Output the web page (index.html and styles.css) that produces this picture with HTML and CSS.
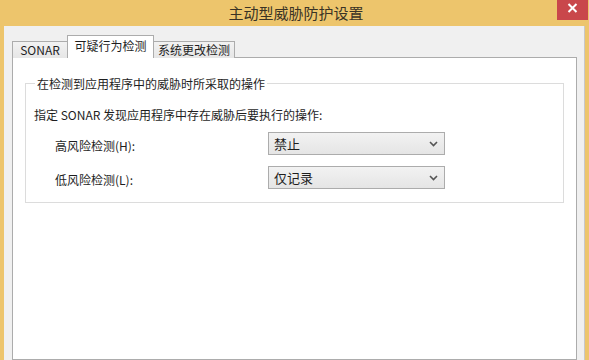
FILE: index.html
```html
<!DOCTYPE html>
<html lang="zh-CN">

<head>
    <meta charset="UTF-8">
    <meta name="viewport" content="width=device-width, initial-scale=1.0">
    <title>主动型威胁防护设置</title>
    <link rel="stylesheet" href="styles.css">
</head>

<body>

    <div class="window">
        <!-- Barre de titre -->
        <div class="title-bar">
            <span class="title-spacer"></span>
            <span class="title">主动型威胁防护设置</span>
            <svg class="caption-x" width="31" height="20" viewBox="0 0 31 20">
                <rect x="0" y="0" width="31" height="20" fill="#c9474b"/>
                <path d="M11.5 4 L19.5 12 M19.5 4 L11.5 12" stroke="#fff" stroke-width="2"/>
            </svg>
        </div>

        <div class="window-body">
            <!-- Onglets -->
            <div class="tabs">
                <div class="tab tab-sonar">SONAR</div>
                <div class="tab tab-active">可疑行为检测</div>
                <div class="tab tab-system">系统更改检测</div>
            </div>

            <div class="tab-panel">
                <fieldset class="group-box">
                    <legend>在检测到应用程序中的威胁时所采取的操作</legend>

                    <p class="intro">指定 SONAR 发现应用程序中存在威胁后要执行的操作:</p>

                    <div class="option-row">
                        <label class="option-label">高风险检测(H):</label>
                        <div class="combo">
                            <span>禁止</span>
                            <svg width="9" height="6" viewBox="0 0 9 6"><path d="M1 1 L4.5 4.5 L8 1" fill="none" stroke="#555" stroke-width="1.6"/></svg>
                        </div>
                    </div>

                    <div class="option-row">
                        <label class="option-label">低风险检测(L):</label>
                        <div class="combo">
                            <span>仅记录</span>
                            <svg width="9" height="6" viewBox="0 0 9 6"><path d="M1 1 L4.5 4.5 L8 1" fill="none" stroke="#555" stroke-width="1.6"/></svg>
                        </div>
                    </div>
                </fieldset>
            </div>
        </div>
    </div>

</body>
</html>
```

FILE: styles.css
```css
body {
    font-family: "Noto Sans CJK SC", "Noto Sans", sans-serif;
    font-size: 12px;
    color: #1e1e1e;
    margin: 0;
    width: 589px;
    height: 360px;
    overflow: hidden;
}

.window {
    height: 360px;
    background-color: #edc56c;
    border-left: 4px solid #edc56c;
    border-right: 1px solid #edc56c;
    display: flex;
    flex-direction: column;
}

.title-bar {
    height: 26px;
    display: flex;
    align-items: flex-start;
}

.title-spacer {
    width: 31px;
}

.title {
    flex: 1;
    text-align: center;
    font-size: 15px;
    line-height: 26px;
    color: #3a3325;
}

.caption-x {
    flex: none;
    display: block;
}

.window-body {
    flex: 1;
    background-color: #f0f0f0;
    padding: 9px 7px 0 8px;
    margin-right: 3px;
    display: flex;
    flex-direction: column;
    border-right: 1px solid #c8c8c8;
}

.tabs {
    display: flex;
    align-items: flex-end;
    position: relative;
    z-index: 1;
    margin-bottom: -1px;
}

.tab {
    height: 16px;
    line-height: 15px;
    text-align: center;
    border: 1px solid #acacac;
    border-bottom: none;
    background: linear-gradient(#f2f2f2, #e6e6e6);
}

.tab-sonar {
    width: 54px;
}

.tab-active {
    width: 85px;
    height: 22px;
    line-height: 20px;
    background: #fff;
    border-left: 1px solid #acacac;
    margin-left: -1px;
}

.tab-system {
    width: 80px;
    border-left: none;
}

.tab-panel {
    flex: 1;
    background-color: #fff;
    border: 1px solid #acacac;
    padding: 17px 12px 0 12px;
}

.group-box {
    margin: 0;
    border: 1px solid #dcdcdc;
    padding: 0 0 13px 8px;
}

.group-box legend {
    padding: 0 2px;
    margin-left: 1px;
}

.intro {
    margin: 14px 0 9px 0;
}

.option-row {
    display: flex;
    align-items: center;
    margin-bottom: 11px;
}

.option-row:last-child {
    margin-bottom: 0;
}

.option-label {
    width: 213px;
    padding-left: 21px;
    padding-top: 3px;
}

.combo {
    height: 21px;
    border: 1px solid #acacac;
    background: linear-gradient(#f2f2f2, #e5e5e5);
    display: flex;
    align-items: center;
    justify-content: space-between;
    padding: 0 6px 0 5px;
    box-sizing: content-box;
    width: 164px;
    font-size: 13px;
}
```
